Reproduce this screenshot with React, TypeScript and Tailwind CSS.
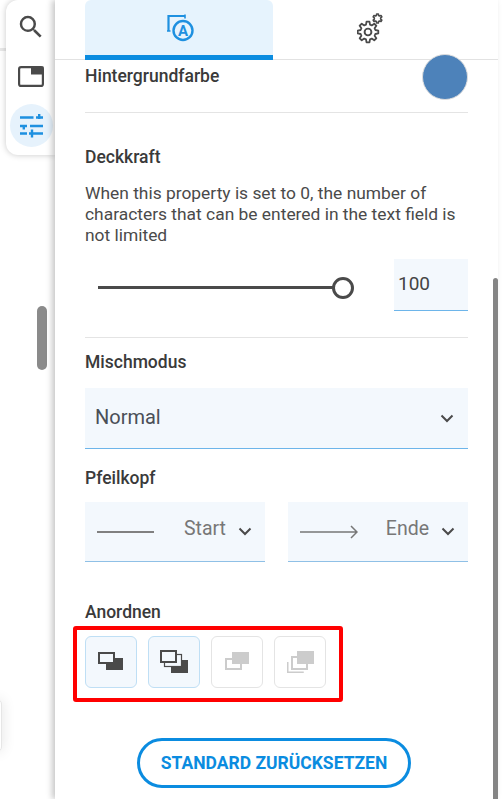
import React from "react";

const font = { fontFamily: "Roboto, sans-serif" };

function gearPath(cx: number, cy: number, ro: number, ri: number, teeth: number) {
  const pts: string[] = [];
  const step = (Math.PI * 2) / teeth;
  for (let i = 0; i < teeth; i++) {
    const a = i * step - Math.PI / 2;
    const list: [number, number][] = [
      [ri, a - step * 0.34],
      [ro, a - step * 0.18],
      [ro, a + step * 0.18],
      [ri, a + step * 0.34],
    ];
    list.forEach(([r, t]) => pts.push((cx + r * Math.cos(t)).toFixed(2) + " " + (cy + r * Math.sin(t)).toFixed(2)));
  }
  return "M" + pts.join("L") + "Z";
}

function Chevron() {
  return (
    <svg width="14" height="9" viewBox="0 0 14 9" className="shrink-0">
      <path d="M1.5 1.5 L7 7 L12.5 1.5" fill="none" stroke="#4a4a4a" strokeWidth="2" />
    </svg>
  );
}

function ArrangeIcon({ kind }: { kind: number }) {
  const dark = "#4a4a4a";
  const light = "#cccccc";
  const bg = "#f3f8fd";
  if (kind === 0)
    return (
      <svg width="25" height="18" viewBox="0 0 25 18" className="ml-[-1px] mt-[-2px]">
        <rect x="8" y="6" width="17" height="12" fill={dark} />
        <rect x="1" y="1" width="15" height="10" fill={bg} stroke={dark} strokeWidth="2" />
      </svg>
    );
  if (kind === 1)
    return (
      <svg width="28" height="23" viewBox="0 0 28 23" className="mt-[-1px]">
        <rect x="11" y="10" width="17" height="13" fill={dark} />
        <rect x="4.5" y="4.5" width="17" height="12" fill={bg} stroke={dark} strokeWidth="1.2" />
        <rect x="1" y="1" width="15" height="11" fill={bg} stroke={dark} strokeWidth="2" />
      </svg>
    );
  if (kind === 2)
    return (
      <svg width="24" height="18" viewBox="0 0 24 18" className="mt-[-2px]">
        <rect x="1" y="7" width="15" height="10" fill="#fff" stroke={light} strokeWidth="2" />
        <rect x="7" y="0" width="17" height="12" fill={light} />
      </svg>
    );
  return (
    <svg width="27" height="22" viewBox="0 0 27 22">
      <path d="M0.75 11v10.25h16" fill="none" stroke={light} strokeWidth="1.5" />
      <rect x="5" y="6" width="15" height="12" fill="#fff" stroke={light} strokeWidth="2" />
      <rect x="10" y="0" width="17" height="13" fill={light} />
    </svg>
  );
}

function Label({ children, className = "" }: { children: React.ReactNode; className?: string }) {
  return <div className={"text-[17.5px] leading-[20px] font-medium text-[#3a3a3a] " + className}>{children}</div>;
}

export default function App() {
  return (
    <div className="flex w-[503px] h-[799px] overflow-hidden bg-white relative" style={font}>
      <div className="relative w-[55px] shrink-0 bg-white">
        <div className="h-[51px] border-b-[3px] border-[#e8e8e8] w-[6px]" />
        <div className="absolute left-[6px] top-0 w-[49px] h-[155px] bg-white rounded-l-[12px] shadow-[0_0_6px_rgba(0,0,0,0.22)] flex flex-col items-start">
          <svg width="30" height="30" viewBox="0 0 24 24" className="mt-[12px] ml-[10px]" fill="#4a4a4a">
            <path d="M15.5 14h-.79l-.28-.27A6.47 6.47 0 0 0 16 9.5 6.5 6.5 0 1 0 9.5 16c1.61 0 3.09-.59 4.23-1.57l.27.28v.79l5 4.99L20.49 19l-4.99-5zm-6 0C7.01 14 5 11.99 5 9.5S7.01 5 9.5 5 14 7.01 14 9.5 11.99 14 9.5 14z" />
          </svg>
          <svg width="26" height="21" viewBox="0 0 26 21" className="mt-[24px] ml-[12px]">
            <rect x="1.1" y="1.1" width="23.8" height="18.8" rx="2" fill="none" stroke="#4a4a4a" strokeWidth="2.2" />
            <rect x="13" y="0.5" width="12.5" height="8" fill="#4a4a4a" />
          </svg>
          <div className="mt-[17px] ml-[4px] w-[43px] h-[43px] rounded-full bg-[#e6f2fc] flex items-center justify-center">
            <svg width="23" height="24" viewBox="0 0 23 24" stroke="#1e90e0" strokeWidth="2.4" fill="none">
              <path d="M0 3.5h13.5M16 3.5h7M19.2 0v5" />
              <path d="M0 12h7M10 12h13M3.8 12v3.5" />
              <path d="M0 19.5h7M9 19.5h14M12 15.5v8" />
            </svg>
          </div>
        </div>
        <div className="absolute left-[37px] top-[306px] w-[10px] h-[64px] rounded-full bg-[#8a8a8a]" />
        <div className="absolute left-[-8px] top-[699px] w-[10px] h-[53px] rounded-[6px] bg-white border border-[#e6e6e6] shadow-[0_0_14px_rgba(0,0,0,0.12)]" />
      </div>

      <div className="relative w-[443px] shrink-0 bg-white shadow-[-3px_0_6px_rgba(0,0,0,0.22)] pl-[30px] pr-[30px]">
        <div className="absolute left-0 top-[59px] w-[443px] h-px bg-[#e2e2e2]" />
        <div className="relative flex h-[60px] w-[383px] z-10">
          <div className="w-[188px] h-[60px] rounded-t-[6px] bg-[#e6f3fd] border-b-[5px] border-[#0b8ce0] flex items-center justify-center">
            <svg width="27" height="28" viewBox="0 0 27 28" className="mt-[1px] ml-[2px]">
              <path d="M1.5 17V2H18" fill="none" stroke="#1e90e0" strokeWidth="2.2" />
              <path d="M18 0.5v4M0 17h3.5" stroke="#1e90e0" strokeWidth="1.6" />
              <circle cx="16" cy="16.5" r="9.5" fill="#e6f3fd" stroke="#1e90e0" strokeWidth="2.4" />
              <text x="16" y="22" textAnchor="middle" fontSize="15" fontWeight="700" fill="#1e90e0" fontFamily="Roboto, sans-serif">A</text>
            </svg>
          </div>
          <div className="w-[195px] flex items-center justify-center">
            <svg width="26" height="31" viewBox="0 0 26 31" className="mr-[1px] mt-[-3px]" fill="none" stroke="#4a4a4a">
              <path d={gearPath(11, 19, 10.4, 7.6, 8)} strokeWidth="1.8" strokeLinejoin="round" />
              <circle cx="11" cy="19" r="3.4" strokeWidth="1.9" />
              <path d={gearPath(20.5, 5.5, 4.6, 3.2, 6)} strokeWidth="1.6" strokeLinejoin="round" />
            </svg>
          </div>
        </div>

        <div className="relative h-[53px] border-b border-[#e4e4e4]">
          <Label className="pt-[6px]">Hintergrundfarbe</Label>
          <div className="absolute right-0 top-[-6px] w-[46px] h-[46px] rounded-full bg-[#4d82ba] border border-[#dddddd]" />
        </div>

        <Label className="mt-[34px]">Deckkraft</Label>
        <p className="mt-[16px] text-[17.4px] leading-[21px] text-[#4a4a4a]">
          When this property is set to 0, the number of characters that can be entered in the text field is not limited
        </p>
        <div className="flex items-start mt-[13px] h-[52px]">
          <div className="relative ml-[13px] mt-[27px] w-[245px] h-[3px] bg-[#4a4a4a]">
            <div className="absolute right-[-11px] top-[-9.5px] w-[22px] h-[22px] rounded-full bg-white border-[3px] border-[#4a4a4a]" />
          </div>
          <div className="ml-auto w-[74px] h-[52px] bg-[#f3f8fd] border-b border-[#6db5ea] pl-[4px] pt-[13px] text-[19px] leading-[24px] text-[#444444]">100</div>
        </div>

        <div className="mt-[26px] border-t border-[#e4e4e4]" />
        <Label className="mt-[14px]">Mischmodus</Label>
        <div className="mt-[16px] h-[61px] bg-[#f3f8fd] border-b border-[#6db5ea] flex items-center justify-between pl-[10px] pr-[14px] text-[20px] text-[#4a4f57]">
          <span className="mt-[-2px]">Normal</span>
          <Chevron />
        </div>

        <Label className="mt-[19px]">Pfeilkopf</Label>
        <div className="flex justify-between mt-[14px]">
          <div className="w-[180px] h-[60px] bg-[#f3f8fd] border-b border-[#8fc0e6] flex items-center pl-[12px] pr-[13px]">
            <div className="w-[57px] h-[2px] bg-[#808080]" />
            <span className="ml-auto mr-[12px] mt-[-6px] text-[19.5px] text-[#777777]">Start</span>
            <Chevron />
          </div>
          <div className="w-[180px] h-[60px] bg-[#f3f8fd] border-b border-[#8fc0e6] flex items-center pl-[12px] pr-[13px]">
            <svg width="58" height="16" viewBox="0 0 58 16" className="shrink-0">
              <path d="M0 8h56M51 2l6 6-6 6" fill="none" stroke="#777777" strokeWidth="1.5" />
            </svg>
            <span className="ml-auto mr-[12px] mt-[-6px] text-[19.5px] text-[#777777]">Ende</span>
            <Chevron />
          </div>
        </div>

        <Label className="mt-[39px] translate-y-[1px]">Anordnen</Label>
        <div className="relative flex gap-[11px] mt-[15px]">
          <div className="absolute left-[-12px] top-[-10px] w-[270px] h-[76px] border-[4px] border-[#ff0000] rounded-[3px]" />
          {[0, 1, 2, 3].map((k) => (
            <div
              key={k}
              className={
                k < 2
                  ? "w-[52px] h-[52px] rounded-[6px] border border-[#bfdff5] bg-[#f3f8fd] flex items-center justify-center"
                  : "w-[52px] h-[52px] rounded-[6px] border border-[#e4e4e4] bg-white flex items-center justify-center"
              }
            >
              <ArrangeIcon kind={k} />
            </div>
          ))}
        </div>

        <div className="flex mt-[50px] ml-[52px] w-[274px] h-[50px] rounded-full border-[3px] border-[#0b8ce0] items-center justify-center text-[17.5px] font-bold text-[#0b8ce0] uppercase whitespace-nowrap">
          Standard zurücksetzen
        </div>

        <div className="absolute left-[438px] top-[278px] w-[5px] h-[530px] rounded-t-[3px] bg-[#858585]" />
      </div>
    </div>
  );
}
